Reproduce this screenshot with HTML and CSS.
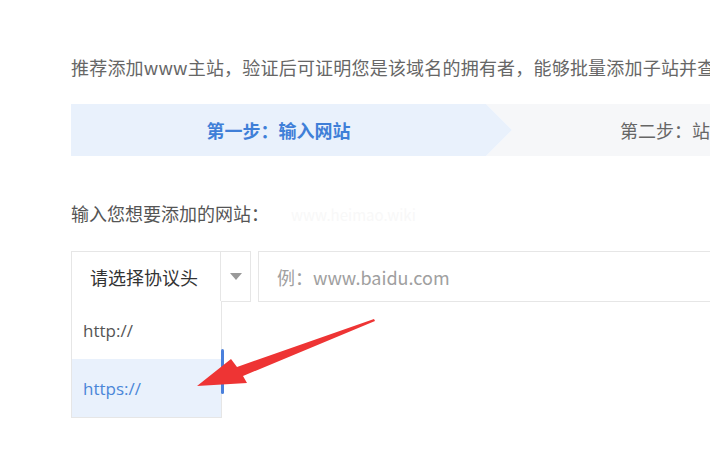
FILE: index.html
```
<!DOCTYPE html>
<html>
<head>
  <link rel="stylesheet" href="styles.css">
</head>
<body>
  <div class="page">
    <p class="intro">推荐添加www主站，验证后可证明您是该域名的拥有者，能够批量添加子站并查</p>

    <div class="steps">
      <div class="step-edge"></div>
      <div class="step step-active">第一步：输入网站</div>
      <div class="step step-next">第二步：站</div>
    </div>

    <div class="field-label">
      输入您想要添加的网站：
      <span class="watermark">www.heimao.wiki</span>
    </div>

    <div class="site-row">
      <div class="protocol">
        <div class="protocol-box">
          <span class="protocol-text">请选择协议头</span>
          <span class="protocol-caret"></span>
        </div>
        <ul class="protocol-menu">
          <li class="menu-item">http://</li>
          <li class="menu-item menu-item-active">https://</li>
        </ul>
        <div class="menu-scroll"></div>
      </div>
      <input class="site-input" type="text" placeholder="例：www.baidu.com">
    </div>

    <!-- annotation arrow -->
    <svg class="pointer" width="200" height="90" viewBox="0 0 200 90">
      <polygon points="177,0 178,2 46,57 50,64 0,67 34,40 40,48" fill="#ee3434"/>
    </svg>
  </div>
</body>
</html>
```

FILE: styles.css
```
body {
  margin: 0;
  background: #fff;
  font-family: "Microsoft YaHei", "Noto Sans CJK SC", sans-serif;
  overflow: hidden;
}
.page {
  position: relative;
  padding-left: 71px;
  width: 900px;
  height: 456px;
}
.intro {
  margin: 0;
  padding-top: 54px;
  font-size: 18px;
  line-height: 26px;
  letter-spacing: 0.2px;
  color: #666;
  white-space: nowrap;
}
.steps {
  position: relative;
  display: flex;
  margin-top: 24px;
  height: 52px;
  background: #f6f7f9;
}
.step {
  display: flex;
  align-items: center;
  font-size: 18px;
  white-space: nowrap;
  position: relative;
}
.step-edge {
  position: absolute;
  left: 0;
  top: 0;
  width: 443px;
  height: 52px;
  background: #fff;
  clip-path: polygon(0 0, 415px 0, 441px 26px, 415px 52px, 0 52px);
}
.step-active {
  width: 441px;
  padding-right: 26px;
  box-sizing: border-box;
  justify-content: center;
  background: #e9f1fc;
  color: #3f7fd8;
  font-weight: bold;
  clip-path: polygon(0 0, 415px 0, 441px 26px, 415px 52px, 0 52px);
}
.step-next {
  padding-left: 108px;
  color: #666;
}
.field-label {
  margin-top: 44px;
  font-size: 18px;
  line-height: 26px;
  color: #555;
  white-space: nowrap;
}
.watermark {
  margin-left: 18px;
  font-size: 15px;
  color: #f8f8f8;
}
.site-row {
  display: flex;
  gap: 7px;
  margin-top: 23px;
  height: 51px;
}
.protocol {
  position: relative;
  width: 180px;
}
.protocol-box {
  display: flex;
  height: 51px;
  box-sizing: border-box;
  border: 1px solid #e6e6e6;
}
.protocol-text {
  width: 149px;
  box-sizing: border-box;
  border-right: 1px solid #e6e6e6;
  padding-left: 18px;
  display: flex;
  align-items: center;
  font-size: 18px;
  color: #333;
}
.protocol-caret {
  flex: 1;
  display: flex;
  align-items: center;
  justify-content: center;
}
.protocol-caret::before {
  content: "";
  border-left: 6px solid transparent;
  border-right: 6px solid transparent;
  border-top: 7px solid #999;
}
.protocol-menu {
  position: absolute;
  left: 0;
  top: 50px;
  width: 151px;
  margin: 0;
  padding: 0;
  list-style: none;
  box-sizing: border-box;
  border: 1px solid #e6e6e6;
  border-top: none;
  background: #fff;
}
.menu-item {
  height: 58px;
  padding-left: 11px;
  display: flex;
  align-items: center;
  font-family: "Open Sans", "Noto Sans CJK SC", sans-serif;
  font-size: 17px;
  color: #555;
}
.menu-item-active {
  background: #e9f1fc;
  color: #4a86d8;
}
.menu-scroll {
  position: absolute;
  left: 150px;
  top: 98px;
  width: 3px;
  height: 45px;
  border-radius: 2px;
  background: #4a80dc;
}
.site-input {
  width: 560px;
  height: 51px;
  box-sizing: border-box;
  border: 1px solid #e6e6e6;
  padding: 0 0 0 18px;
  font-family: "Microsoft YaHei", "Noto Sans CJK SC", sans-serif;
  font-size: 18px;
  outline: none;
}
.site-input::placeholder {
  color: #a0a0a0;
}
.pointer {
  position: absolute;
  left: 197px;
  top: 319px;
}
```
